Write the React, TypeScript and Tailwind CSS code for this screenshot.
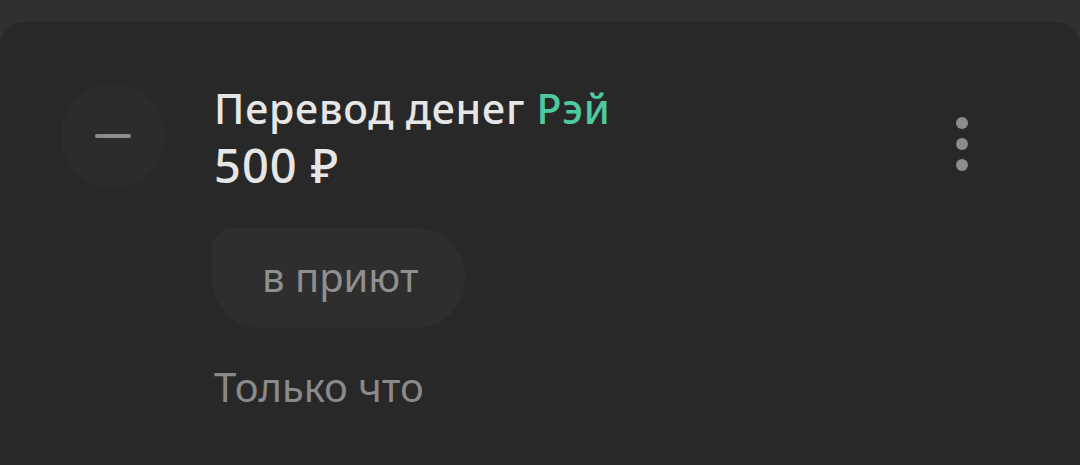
import React from "react";

export default function App() {
  return (
    <div
      className="w-[1080px] h-[465px] bg-[#303030] pt-[22px] overflow-hidden"
      style={{ fontFamily: '"Noto Sans", "Open Sans", sans-serif' }}
    >
      <div className="h-[443px] bg-[#282828] rounded-t-[24px] flex pl-[61px] pr-[112px] pt-[62px]">
        <div className="w-[104px] h-[104px] rounded-full bg-[#2c2c2c] flex items-center justify-center shrink-0">
          <div className="w-[36px] h-[4px] rounded-full bg-[#8a8a8a]" />
        </div>
        <div className="flex-1 ml-[49px] flex flex-col">
          <div className="text-[41px] font-medium leading-[48px] text-[#e6e6e6] tracking-[0.8px]">
            Перевод денег <span className="text-[#4fcaa0]">Рэй</span>
          </div>
          <div className="mt-[5px] text-[47px] font-medium leading-[56px] text-[#e6e6e6] tracking-[1px]">500 ₽</div>
          <div className="mt-[35px] -ml-[2px] self-start h-[100px] pl-[50px] pr-[46px] rounded-[48px] rounded-tl-[20px] bg-[#2e2e2e] flex items-center">
            <span className="text-[40px] text-[#8f8f8f] leading-[40px] -mt-[2px]">в приют</span>
          </div>
          <div className="mt-[35px] text-[40px] text-[#8a8a8a] leading-[48px]">Только что</div>
        </div>
        <div className="flex flex-col gap-[9px] pt-[33px]">
          <div className="w-[12px] h-[12px] rounded-full bg-[#8c8c8c]" />
          <div className="w-[12px] h-[12px] rounded-full bg-[#8c8c8c]" />
          <div className="w-[12px] h-[12px] rounded-full bg-[#8c8c8c]" />
        </div>
      </div>
    </div>
  );
}
